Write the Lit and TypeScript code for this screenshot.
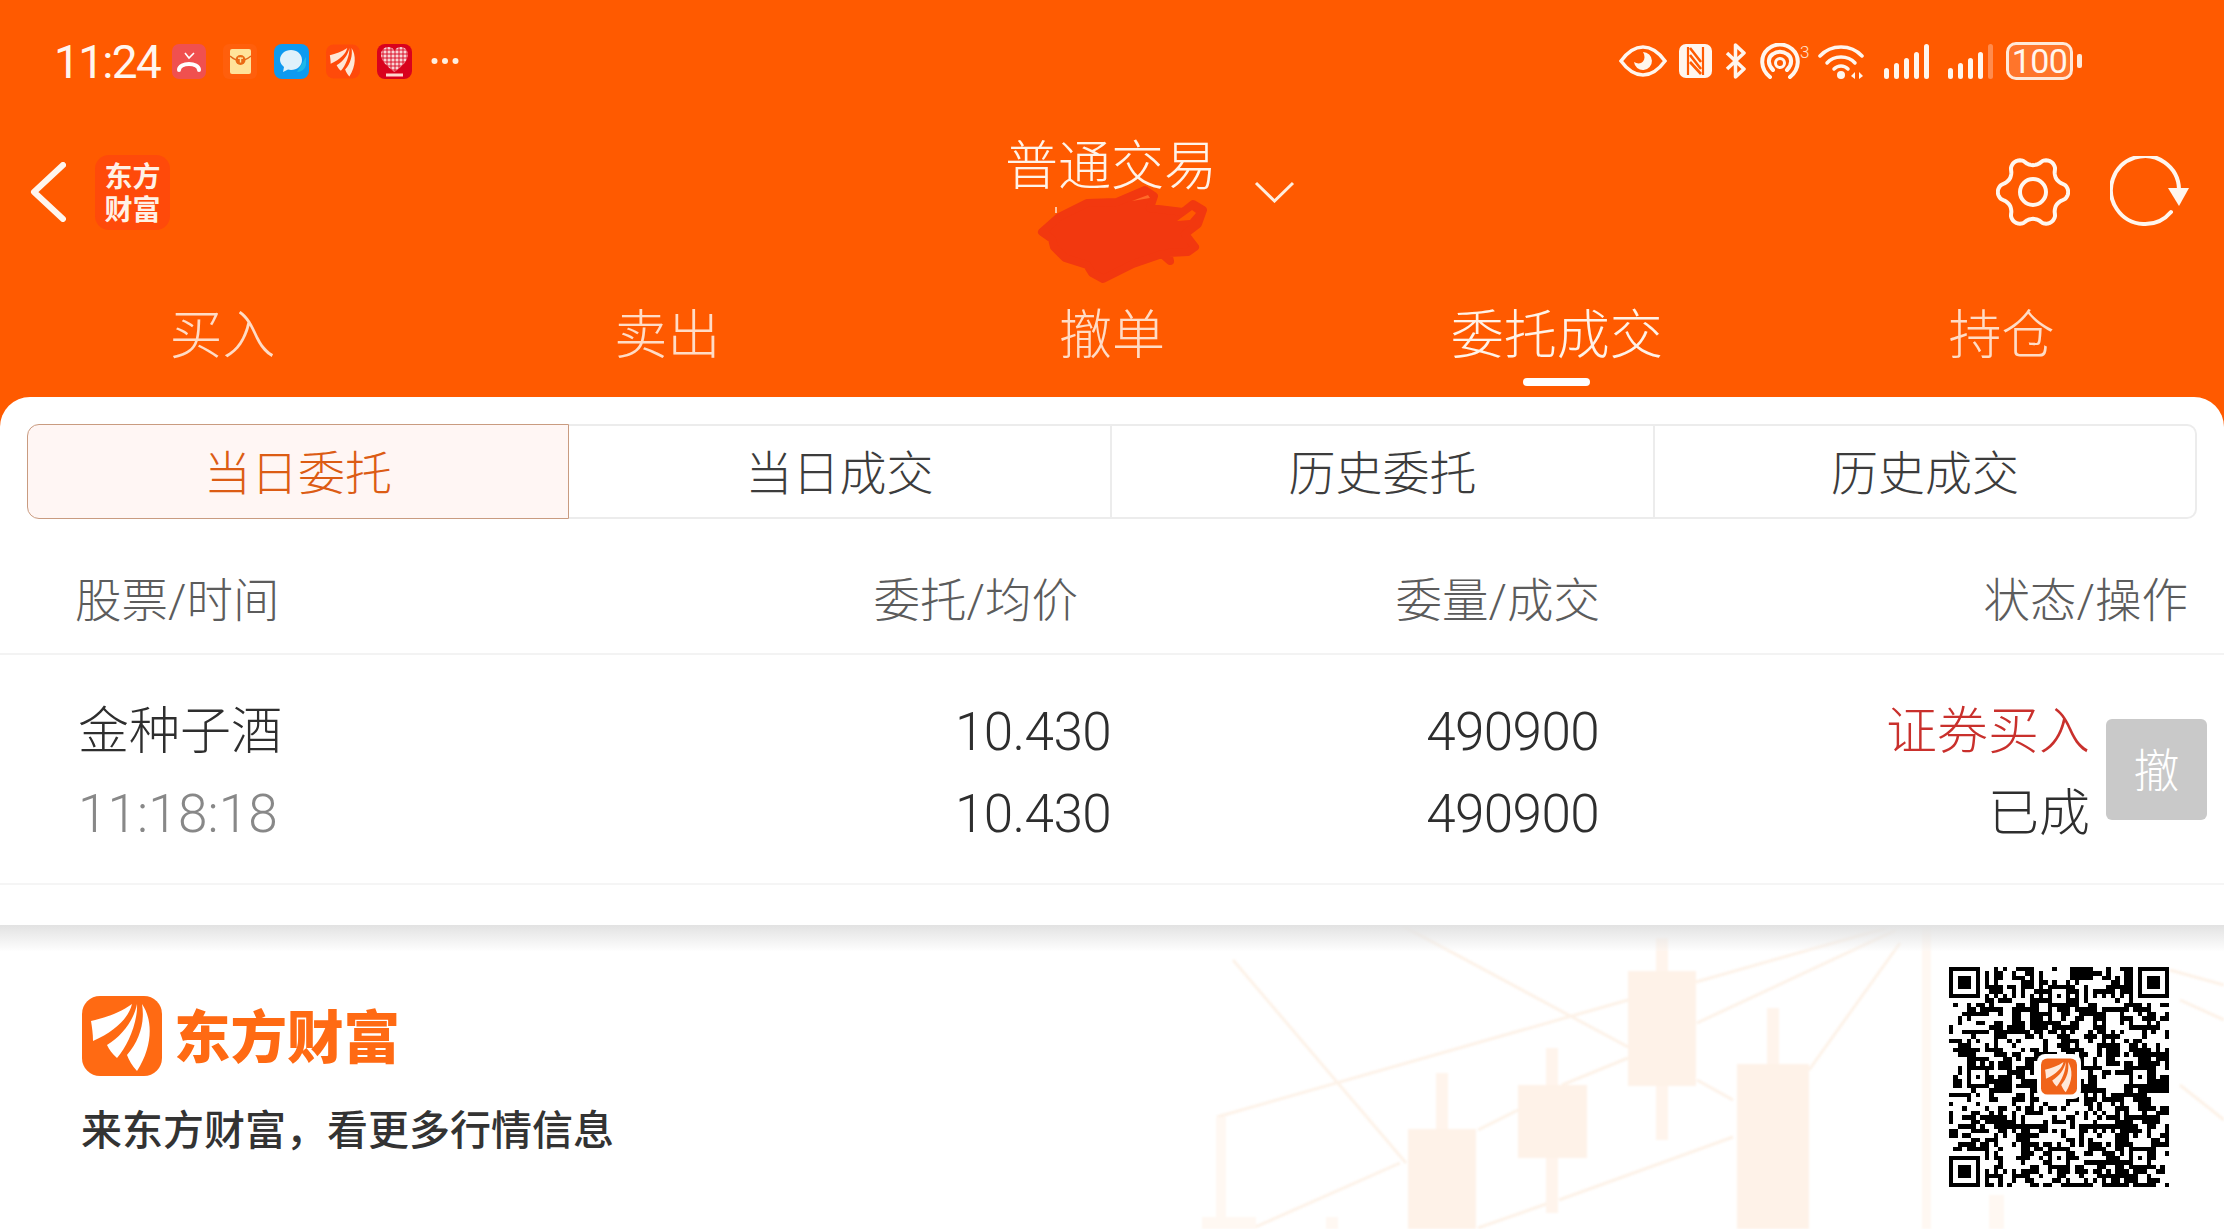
import { LitElement, html, svg, css } from "lit";
import { customElement } from "lit/decorators.js";

const fan = (c: string) => svg`
  <path fill=${c} d="M9 25C22 22 38 17 50 8C47 21 34 35 11 45C11 38 10 31 9 25Z"/>
  <path fill=${c} d="M55 8C56 25 46 50 35 62C30 58 27 53 25 49C40 40 52 24 55 8Z"/>
  <path fill=${c} d="M60 8C71 24 71 50 55 75C50 70 47 64 45 59C58 44 63 26 60 8Z"/>`;

const gearPath = (() => {
  const pts: string[] = [];
  for (let i = 0; i < 144; i++) {
    const t = (i / 144) * Math.PI * 2;
    const k = Math.cos(6 * t);
    const r = 31 + 4.2 * Math.sign(k) * Math.pow(Math.abs(k), 0.7);
    pts.push(`${(37 + r * Math.cos(t)).toFixed(2)} ${(36 + r * Math.sin(t)).toFixed(2)}`);
  }
  return "M" + pts.join("L") + "Z";
})();

const qrPath = (() => {
  const n = 49;
  const g: number[][] = Array.from({ length: n }, () => Array(n).fill(-1));
  const finder = (x: number, y: number) => {
    for (let r = -1; r <= 7; r++)
      for (let c = -1; c <= 7; c++) {
        const yy = y + r, xx = x + c;
        if (yy < 0 || xx < 0 || yy >= n || xx >= n) continue;
        const on = r >= 0 && r <= 6 && c >= 0 && c <= 6 && (r === 0 || r === 6 || c === 0 || c === 6 || (r >= 2 && r <= 4 && c >= 2 && c <= 4));
        g[yy][xx] = on ? 1 : 0;
      }
  };
  finder(0, 0); finder(n - 7, 0); finder(0, n - 7);
  for (let i = 8; i < n - 8; i++) { g[6][i] = i % 2 ? 0 : 1; g[i][6] = i % 2 ? 0 : 1; }
  for (const cy of [6, 24, 42]) for (const cx of [6, 24, 42]) {
    if ((cy === 6 && cx === 6) || (cy === 6 && cx === 42) || (cy === 42 && cx === 6)) continue;
    for (let r = -2; r <= 2; r++) for (let c = -2; c <= 2; c++)
      g[cy + r][cx + c] = Math.max(Math.abs(r), Math.abs(c)) === 1 ? 0 : 1;
  }
  let s = 20231;
  const rnd = () => { s = (s * 1103515245 + 12345) & 0x7fffffff; return (s >> 12) / (0x7fffffff >> 12); };
  for (let r = 0; r < n; r++) for (let c = 0; c < n; c++) {
    if (g[r][c] !== -1) continue;
    const left = c > 0 ? g[r][c - 1] : 0, up = r > 0 ? g[r - 1][c] : 0;
    const p = 0.36 + (left === 1 ? 0.14 : 0) + (up === 1 ? 0.14 : 0);
    g[r][c] = rnd() < p ? 1 : 0;
  }
  let d = "";
  for (let r = 0; r < n; r++) for (let c = 0; c < n; c++) {
    if (g[r][c] !== 1) continue;
    if (r >= 20 && r <= 28 && c >= 20 && c <= 28) continue;
    d += `M${c} ${r}h1v1h-1z`;
  }
  return d;
})();

const bars = (last: string) => svg`
  <rect x="0" y="24" width="5" height="11" rx="2.5" fill="#fff6ee"/>
  <rect x="10" y="19" width="5" height="16" rx="2.5" fill="#fff6ee"/>
  <rect x="20" y="14" width="5" height="21" rx="2.5" fill="#fff6ee"/>
  <rect x="30" y="8" width="5" height="27" rx="2.5" fill="#fff6ee"/>
  <rect x="40" y="0" width="5" height="35" rx="2.5" fill=${last}/>`;

@customElement("app-root")
export class AppRoot extends LitElement {
  static styles = css`
    :host { display: block; width: 2224px; height: 1229px; overflow: hidden; background: #ff5a00;
      font-family: Roboto, "Noto Sans CJK SC", sans-serif; font-weight: 300; }
    .page { display: flex; flex-direction: column; height: 1229px; }
    svg { display: block; flex: none; }

    .status { height: 122px; flex: none; display: flex; align-items: center; padding: 0 142px 0 54px; }
    .time { width: 118px; flex: none; font-size: 46px; font-weight: 400; letter-spacing: -1.7px; color: #fff6ee; line-height: 50px; padding-top: 2px; }
    .notif { display: flex; align-items: center; gap: 17px; }
    .notif .more { margin-left: 2px; }
    .spacer { flex: 1; }
    .sys { display: flex; align-items: center; gap: 12px; }
    .sys .tight { margin-left: -4px; }
    .sys .wide { margin-left: 8px; }
    .sys .wide + .wide { margin-left: 7px; }
    .sys .mid { margin-left: 1px; }
    .battery { display: flex; align-items: center; gap: 4px; }
    .cell { width: 67px; height: 38px; box-sizing: border-box; border: 3px solid #ffe9d9; border-radius: 10px;
      background: rgba(255,255,255,.17); color: #fff6ee; font-size: 34px; font-weight: 400; letter-spacing: -.6px; line-height: 32px; text-align: center; }
    .cap { width: 5px; height: 14px; border-radius: 2px; background: #ffe9d9; }

    .bar { height: 168px; flex: none; display: grid; grid-template-columns: 1007px auto 1fr; align-items: center; }
    .bar-left { display: flex; align-items: center; padding-left: 30px; gap: 29px; margin-bottom: 28px; }
    .brand { width: 75px; height: 75px; border-radius: 14px; background: #ff4a0a; color: #fff1e6; font-size: 28px; font-weight: 700;
      line-height: 33px; text-align: center; font-family: "Noto Sans CJK SC", sans-serif; display: flex; align-items: center; justify-content: center; }
    .bar-mid { align-self: start; margin-top: 16px; position: relative; display: flex; align-items: flex-start; }
    .title { font-size: 53px; line-height: 58px; color: #fff3e8; width: 208px; margin-left: -2px; white-space: nowrap; }
    .drop { margin: 43px 0 0 41px; }
    .scribble { position: absolute; left: 29px; top: 45px; }
    .bar-right { display: flex; justify-content: flex-end; align-items: center; gap: 40px; padding-right: 35px; margin-bottom: 28px; }

    .tabs { height: 107px; flex: none; display: grid; grid-template-columns: repeat(5, 1fr); }
    .tab { display: flex; flex-direction: column; align-items: center; padding-top: 17px; font-size: 53px; line-height: 58px; color: #ffdcc6; }
    .tab.on { color: #fff3e8; }
    .tab i { display: block; width: 67px; height: 8px; margin-top: 13px; border-radius: 4px; }
    .tab.on i { background: #fff; }

    .card { height: 528px; flex: none; background: #fff; border-radius: 30px 30px 0 0; display: flex; flex-direction: column; }
    .seg { margin: 27px 27px 0; height: 95px; flex: none; display: grid; grid-template-columns: 542px 543px 543px 542px; }
    .seg div { display: flex; align-items: center; justify-content: center; font-size: 47px; color: #3c3c3c; box-sizing: border-box;
      border: 2px solid #ececec; border-left: none; padding-bottom: 4px; }
    .seg div:last-child { border-radius: 0 10px 10px 0; }
    .seg div.on { border: 1.5px solid #c99b80; border-radius: 12px 0 0 12px; background: #fff6f4; color: #dc5c14; }
    .head { height: 136px; flex: none; box-sizing: border-box; border-bottom: 2px solid #f3f3f3; padding: 53px 36px 0 75px;
      display: grid; grid-template-columns: 240px 763px 522px 588px; font-size: 46.5px; line-height: 58px; color: #5c5c5c; }
    .head span { text-align: right; white-space: nowrap; }
    .head span:first-child { text-align: left; }
    .row { height: 230px; flex: none; box-sizing: border-box; border-bottom: 2px solid #f5f5f5; padding: 0 17px 0 78px;
      display: grid; grid-template-columns: 300px 733px 488px 491px 117px; align-items: center; font-size: 51px; line-height: 82px; color: #2e2e2e; }
    .col { display: flex; flex-direction: column; align-items: flex-end; white-space: nowrap; padding-top: 7px; }
    .col.name { align-items: flex-start; }
    .num { font-size: 53px; letter-spacing: -.6px; }
    .grey { color: #888; letter-spacing: .15px; }
    .red { color: #c9302c; }
    .btn { width: 101px; height: 101px; justify-self: end; border-radius: 6px; background: #c9c9c9; color: #fff; font-size: 46px; line-height: 105px; text-align: center; }

    .foot { flex: 1; position: relative; overflow: hidden; background: #fff; display: flex; justify-content: space-between; padding: 42px 55px 0 81px; }
    .shade { position: absolute; left: 0; right: 0; top: 0; height: 26px; background: linear-gradient(#e2e2e2, rgba(250,250,250,.2)); }
    .art { position: absolute; left: 0; top: 0; filter: blur(1px); }
    .promo { position: relative; padding-top: 29px; }
    .lockup { display: flex; align-items: center; gap: 11px; }
    .word { font-size: 56.5px; line-height: 74px; height: 80px; font-weight: 900; color: #ff6a13; font-family: "Noto Sans CJK SC", sans-serif; }
    .tag { margin-top: 26px; font-size: 41px; line-height: 50px; font-weight: 500; color: #333; font-family: "Noto Sans CJK SC", sans-serif; }
    .qr { position: relative; width: 220px; height: 220px; }
    .qr-logo { position: absolute; left: 88px; top: 87px; padding: 4px; background: #fff; border-radius: 8px; }
  `;

  render() {
    const artLines: number[][] = [
      [1401,0,1628,122],[1217,192,1628,75],[1696,57,1886,3],[1233,35,1406,238],[1253,303,1400,238],
      [1478,205,1518,185],[1562,160,1628,133],[1697,98,1896,5],[1809,145,1900,18],[1478,303,1549,278],
      [1559,275,1733,212],[1697,155,1733,175],[2170,45,2224,60],[2180,75,2224,95],[2180,160,2224,195],
    ];
    const candles: number[][] = [
      [1628,46,68,115,1662,13,202],[1518,160,69,73,1552,123,165],[1408,204,68,100,1442,148,100],
      [1737,139,72,170,1773,83,100],
    ];
    const faint: number[][] = [
      [1202,292,54,20],[1326,292,12,20],[1216,192,10,110],[1922,0,9,304],[1989,270,15,40],
    ];
    return html`<div class="page">
      <div class="status">
        <div class="time">11:24</div>
        <div class="notif">
          <svg width="34" height="35" viewBox="0 0 34 35">
            <rect width="34" height="35" rx="7" fill="#f0504f"/>
            <path d="M7 26C7 18 27 18 27 26" fill="none" stroke="#fff" stroke-width="4" stroke-linecap="round"/>
            <path d="M13 9l4 5 5-5" fill="none" stroke="#fff" stroke-width="1.6"/>
          </svg>
          <svg width="34" height="35" viewBox="0 0 34 35">
            <rect x="0" y="0" width="34" height="35" rx="6" fill="#ff5f0c"/>
            <rect x="7" y="5" width="21" height="25" rx="2" fill="#ffe39a"/>
            <path d="M7 12Q17 21 28 12" fill="none" stroke="#e2661a" stroke-width="1.5"/>
            <circle cx="17.5" cy="16" r="5" fill="#ea6a14"/>
            <rect x="15" y="13.5" width="5" height="1.4" fill="#ffe39a"/><rect x="16.8" y="13.5" width="1.4" height="5" fill="#ffe39a"/>
          </svg>
          <svg width="35" height="35" viewBox="0 0 35 35">
            <rect width="35" height="35" rx="8" fill="#0d9af0"/>
            <path d="M23 28c4 0 9-3 9-8v-7l-9 15z" fill="#1fb8e8"/>
            <path d="M17 6c6 0 11 4 11 10s-5 10-11 10c-1 0-2 0-3-.4L9 28l1-5c-2-2-4-4-4-7C6 10 11 6 17 6z" fill="#dff1fb"/>
          </svg>
          <svg width="34" height="35" viewBox="0 0 80 80">
            <rect width="80" height="80" rx="18" fill="#ff4a0a"/>${fan("#ffe6d6")}
          </svg>
          <svg width="35" height="35" viewBox="0 0 35 35">
            <defs><pattern id="mesh" width="4" height="4" patternUnits="userSpaceOnUse"><rect width="4" height="4" fill="#f8d5d5"/><path d="M0 2h4M2 0v4" stroke="#d9021d" stroke-width=".9"/></pattern></defs>
            <rect width="35" height="35" rx="8" fill="#d9021d"/>
            <path d="M17.5 28C8 21 4 16 4 10.500C4 6 7.500 3 11 3C14 3 16.500 4.500 17.500 7C18.500 4.500 21 3 24 3C27.500 3 31 6 31 10.500C31 16 27 21 17.500 28Z" fill="url(#mesh)"/>
            <rect x="9" y="29.500" width="17" height="3" fill="#ffd9d0"/>
          </svg>
          <svg class="more" width="28" height="8" viewBox="0 0 28 8">
            <circle cx="3.500" cy="4" r="3" fill="#ffeede"/><circle cx="14" cy="4" r="3" fill="#ffeede"/><circle cx="24.500" cy="4" r="3" fill="#ffeede"/>
          </svg>
        </div>
        <div class="spacer"></div>
        <div class="sys">
          <svg width="48" height="32" viewBox="0 0 48 32">
            <path d="M2 16C10 5 17 2 24 2S38 5 46 16C38 27 31 30 24 30S10 27 2 16Z" fill="none" stroke="#fff6ee" stroke-width="3.500"/>
            <path d="M24 7a9 9 0 1 1-9 10c3 2 7 2 9-.5 2-2.500 2-6 0-9.500z" fill="#fff6ee"/>
          </svg>
          <svg width="33" height="34" viewBox="0 0 33 34">
            <rect width="33" height="34" rx="7" fill="#fff6ee"/>
            <path d="M9 3v28M24 3v28" stroke="#ff5a00" stroke-width="2.200"/>
            <path d="M11 4l11 14M11 11l11 14M11 18l11 12" stroke="#ff5a00" stroke-width="2.600"/>
          </svg>
          <svg width="23" height="36" viewBox="0 0 23 36">
            <path d="M3 26L20 10 11.500 2v32L20 26 3 10" fill="none" stroke="#fff6ee" stroke-width="3.500" stroke-linejoin="round"/>
          </svg>
          <svg width="51" height="36" viewBox="0 0 51 36">
            <path d="M11 34C1 26 1 13 9 6c7-6 17-6 24 0 8 7 8 20-2 28" fill="none" stroke="#fff6ee" stroke-width="4" stroke-linecap="round"/>
            <path d="M14 27C8 21 9 14 14 11c4-3 10-3 14 0 5 3 6 10 0 16" fill="none" stroke="#fff6ee" stroke-width="4" stroke-linecap="round"/>
            <circle cx="21" cy="20" r="4.500" fill="none" stroke="#fff6ee" stroke-width="3"/>
            <text x="41" y="15" font-size="17" font-family="Roboto" fill="#ffe4cf">3</text>
          </svg>
          <svg class="tight" width="46" height="35" viewBox="0 0 46 35">
            <path d="M2 12C13 0 33 0 44 12" fill="none" stroke="#fff6ee" stroke-width="3.500" stroke-linecap="round"/>
            <path d="M9 19C16 11 30 11 37 19" fill="none" stroke="#fff6ee" stroke-width="3.500" stroke-linecap="round"/>
            <path d="M16 25C20 21 26 21 30 25" fill="none" stroke="#fff6ee" stroke-width="3.500" stroke-linecap="round"/>
            <circle cx="23" cy="31" r="4" fill="#fff6ee"/>
            <path d="M37 28v7l-4-3zM41 28v7l4-3z" fill="#fff6ee"/>
          </svg>
          <svg class="wide" width="45" height="35" viewBox="0 0 45 35">${bars("#fff6ee")}</svg>
          <svg class="wide" width="45" height="35" viewBox="0 0 45 35">${bars("#ff8b4d")}</svg>
          <div class="battery mid"><div class="cell">100</div><div class="cap"></div></div>
        </div>
      </div>

      <div class="bar">
        <div class="bar-left">
          <svg width="36" height="60" viewBox="0 0 36 60"><path d="M33 3L4 30l29 27" fill="none" stroke="#fff6ee" stroke-width="6" stroke-linecap="round" stroke-linejoin="round"/></svg>
          <div class="brand">东方<br/>财富</div>
        </div>
        <div class="bar-mid">
          <div class="title">普通交易</div>
          <svg class="drop" width="41" height="22" viewBox="0 0 41 22"><path d="M2 2l18.500 18L39 2" fill="none" stroke="#ffeede" stroke-width="3"/></svg>
          <svg class="scribble" width="174" height="103" viewBox="-4 -4 174 103">
            <path fill="#f2380f" stroke="#f2380f" stroke-width="8" stroke-linejoin="round" d="M2 45L19 30 47 16 77 15 105 3 114 9 110 21 143 25 153 17 163 23 158 37 145 47 155 60 148 65 128 66 130 74 122 67 93 77 63 92 52 86 47 78 25 71 14 60 12 52Z"/>
            <path fill="#ff5a00" d="M137 34L152 23 156 26 150 33Z"/>
            <path fill="#ff6a28" d="M92 14L108 8 110 11Z"/>
            <path d="M16 20v6" stroke="#ffe6d6" stroke-width="1.500"/>
          </svg>
        </div>
        <div class="bar-right">
          <svg width="74" height="72" viewBox="0 0 74 72">
            <path d=${gearPath} fill="none" stroke="#fff6ee" stroke-width="4" stroke-linejoin="round"/>
            <circle cx="37" cy="36" r="13" fill="none" stroke="#fff6ee" stroke-width="4"/>
          </svg>
          <svg width="79" height="72" viewBox="0 0 79 72">
            <path d="M61 56A34 34 0 1 1 69 33" fill="none" stroke="#fff6ee" stroke-width="4" stroke-linecap="round"/>
            <path d="M58 32H79L69 50Z" fill="#fff6ee"/>
          </svg>
        </div>
      </div>

      <div class="tabs">
        <div class="tab">买入<i></i></div>
        <div class="tab">卖出<i></i></div>
        <div class="tab">撤单<i></i></div>
        <div class="tab on">委托成交<i></i></div>
        <div class="tab">持仓<i></i></div>
      </div>

      <div class="card">
        <div class="seg">
          <div class="on">当日委托</div><div>当日成交</div><div>历史委托</div><div>历史成交</div>
        </div>
        <div class="head"><span>股票/时间</span><span>委托/均价</span><span>委量/成交</span><span>状态/操作</span></div>
        <div class="row">
          <div class="col name"><span>金种子酒</span><span class="num grey">11:18:18</span></div>
          <div class="col"><span class="num">10.430</span><span class="num">10.430</span></div>
          <div class="col"><span class="num">490900</span><span class="num">490900</span></div>
          <div class="col"><span class="red">证券买入</span><span>已成</span></div>
          <div class="btn">撤</div>
        </div>
      </div>

      <div class="foot">
        <svg class="art" width="2224" height="304" viewBox="0 0 2224 304">
          ${artLines.map(l => svg`<line x1=${l[0]} y1=${l[1]} x2=${l[2]} y2=${l[3]} stroke="#fdf2e8" stroke-width="3"/>`)}
          ${faint.map(r => svg`<rect x=${r[0]} y=${r[1]} width=${r[2]} height=${r[3]} fill="#fff8f2"/>`)}
          ${candles.map(c => svg`<rect x=${c[4] - 6} y=${c[5]} width="12" height=${c[6]} fill="#fff4ec"/><rect x=${c[0]} y=${c[1]} width=${c[2]} height=${c[3]} fill="#fef2e8"/>`)}
        </svg>
        <div class="shade"></div>
        <div class="promo">
          <div class="lockup">
            <svg width="82" height="80" viewBox="0 0 80 80"><rect width="80" height="80" rx="18" fill="#ff6a13"/>${fan("#fff")}</svg>
            <div class="word">东方财富</div>
          </div>
          <div class="tag">来东方财富，看更多行情信息</div>
        </div>
        <div class="qr">
          <svg width="220" height="220" viewBox="0 0 49 49" shape-rendering="crispEdges"><path d=${qrPath} fill="#000"/></svg>
          <div class="qr-logo"><svg width="36" height="37" viewBox="0 0 80 80"><rect width="80" height="80" rx="14" fill="#f0641a"/>${fan("#ffe9da")}</svg></div>
        </div>
      </div>
    </div>`;
  }
}
